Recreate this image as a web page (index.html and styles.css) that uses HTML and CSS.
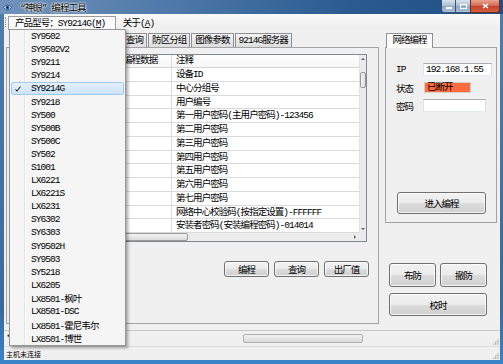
FILE: index.html
```html
<!DOCTYPE html>
<html lang="zh-CN">

<head>
    <meta charset="UTF-8">
    <title>“神眼” 编程工具</title>
    <link rel="stylesheet" href="styles.css">
</head>

<body>

    <header class="titlebar">
        <svg class="appicon" width="9" height="7" viewBox="0 0 9 7">
            <path d="M0.5 3.5 Q4.5 -1 8.5 3.5 Q4.5 8 0.5 3.5Z" fill="#fff" stroke="#1d3f78" stroke-width="0.8" />
            <circle cx="4.5" cy="3.5" r="2" fill="#2f6fd0" />
            <circle cx="4.5" cy="3.5" r="0.9" fill="#0a1a3a" />
        </svg>
        <span class="wintitle">“神眼” 编程工具</span>
        <div class="caption">
            <span class="cbtn cmin"><svg width="6" height="2"><rect width="6" height="2" fill="#fff" /></svg></span>
            <span class="cbtn cmax"><svg width="7" height="5"><rect x=".5" y=".5" width="6" height="4" fill="none" stroke="#fff" /></svg></span>
            <span class="cbtn cclose"><svg width="7" height="6"><path d="M1 1L6 5M6 1L1 5" stroke="#fff" stroke-width="1.6" /></svg></span>
        </div>
    </header>

    <div class="client">
        <nav class="menubar">
            <span class="grip"></span>
            <span class="menu open">产品型号：SY9214G(<u>M</u>)</span>
            <span class="menu">关于(<u>A</u>)</span>
        </nav>

        <div class="main">
            <!-- venstre: programmeringsdata -->
            <section class="leftcol">
                <div class="tabs">
                    <span class="tab">查询</span>
                    <span class="tab">防区分组</span>
                    <span class="tab">图像参数</span>
                    <span class="tab">9214G服务器</span>
                </div>
                <div class="page datapage">
                    <div class="list">
                        <div class="rows">
                            <div class="row head"><span class="c0"></span><span class="c1">编程数据</span><span class="c2">注释</span></div>
                            <div class="row"><span class="c0"></span><span class="c1"></span><span class="c2">设备ID</span></div>
                            <div class="row"><span class="c0"></span><span class="c1"></span><span class="c2">中心分组号</span></div>
                            <div class="row"><span class="c0"></span><span class="c1"></span><span class="c2">用户编号</span></div>
                            <div class="row"><span class="c0"></span><span class="c1"></span><span class="c2">第一用户密码(主用户密码)-123456</span></div>
                            <div class="row"><span class="c0"></span><span class="c1"></span><span class="c2">第二用户密码</span></div>
                            <div class="row"><span class="c0"></span><span class="c1"></span><span class="c2">第三用户密码</span></div>
                            <div class="row"><span class="c0"></span><span class="c1"></span><span class="c2">第四用户密码</span></div>
                            <div class="row"><span class="c0"></span><span class="c1"></span><span class="c2">第五用户密码</span></div>
                            <div class="row"><span class="c0"></span><span class="c1"></span><span class="c2">第六用户密码</span></div>
                            <div class="row"><span class="c0"></span><span class="c1"></span><span class="c2">第七用户密码</span></div>
                            <div class="row"><span class="c0"></span><span class="c1"></span><span class="c2">网络中心校验码(按指定设置)-FFFFFF</span></div>
                            <div class="row"><span class="c0"></span><span class="c1"></span><span class="c2">安装者密码(安装编程密码)-014014</span></div>
                        </div>
                        <div class="vscroll">
                            <span class="arr"><i class="tri up"></i></span>
                            <span class="vthumb"></span>
                            <span class="fill"></span>
                            <span class="arr"><i class="tri down"></i></span>
                        </div>
                        <div class="hscroll">
                            <span class="arr"><i class="tri left"></i></span>
                            <span class="hthumb"></span>
                            <span class="fill"></span>
                            <span class="arr"><i class="tri right"></i></span>
                        </div>
                        <div class="corner"></div>
                    </div>
                    <div class="btnrow">
                        <button class="btn">编程</button>
                        <button class="btn">查询</button>
                        <button class="btn">出厂值</button>
                    </div>
                </div>
            </section>

            <!-- højre: netværk -->
            <section class="rightcol">
                <div class="tabs">
                    <span class="tab sel">网络编程</span>
                </div>
                <div class="page netpage">
                    <div class="field"><label>IP</label><span class="input">192.168.1.55</span></div>
                    <div class="field st"><label>状态</label><span class="state">已断开</span></div>
                    <div class="field"><label>密码</label><span class="input pw"></span></div>
                    <button class="btn enter">进入编程</button>
                </div>
                <div class="armbtns">
                    <button class="btn tall">布防</button>
                    <button class="btn tall">撤防</button>
                    <button class="btn tall wide">校时</button>
                </div>
            </section>
        </div>

        <div class="status s1">
            <span class="panel1">*</span>
            <span class="progress"></span>
            <span class="fill"></span>
            <span class="sgrip"></span>
        </div>
        <div class="status s2">
            <span class="fill">主机未连接</span>
            <span class="sgrip"></span>
        </div>
    </div>

    <ul class="dropdown">
        <li><span class="chk"></span>SY9502</li>
        <li><span class="chk"></span>SY9502V2</li>
        <li><span class="chk"></span>SY9211</li>
        <li><span class="chk"></span>SY9214</li>
        <li class="valgt"><span class="chk"><svg width="6" height="6" viewBox="0 0 6 6"><path d="M0.6 3.4L2 5.2L5.4 0.6" fill="none" stroke="#000" stroke-width="1" /></svg></span>SY9214G</li>
        <li><span class="chk"></span>SY9218</li>
        <li><span class="chk"></span>SY500</li>
        <li><span class="chk"></span>SY500B</li>
        <li><span class="chk"></span>SY500C</li>
        <li><span class="chk"></span>SY502</li>
        <li><span class="chk"></span>S1001</li>
        <li><span class="chk"></span>LX6221</li>
        <li><span class="chk"></span>LX6221S</li>
        <li><span class="chk"></span>LX6231</li>
        <li><span class="chk"></span>SY6302</li>
        <li><span class="chk"></span>SY6303</li>
        <li><span class="chk"></span>SY9502H</li>
        <li><span class="chk"></span>SY9503</li>
        <li><span class="chk"></span>SY5218</li>
        <li><span class="chk"></span>LX6205</li>
        <li><span class="chk"></span>LX8501-枫叶</li>
        <li><span class="chk"></span>LX8501-DSC</li>
        <li><span class="chk"></span>LX8501-霍尼韦尔</li>
        <li><span class="chk"></span>LX8501-博世</li>
    </ul>

</body>

</html>
```

FILE: styles.css
```css
body {
    margin: 0;
    width: 503px;
    height: 364px;
    overflow: hidden;
    position: relative;
    background: linear-gradient(#4f7cab 0%, #3a6a9c 85%, #3b84cb 100%);
    font-family: "Liberation Mono", "Noto Sans CJK SC", monospace;
    font-size: 9.5px;
    letter-spacing: -0.95px;
    color: #000;
}

/* TITLE BAR */

.titlebar {
    height: 14px;
    display: flex;
    align-items: center;
    padding: 0 3px;
    background: linear-gradient(90deg, #7193bb 0%, #4d78a8 35%, #2a5a8f 70%, #1f4f86 100%);
}

.appicon {
    margin-right: 8px;
}

.wintitle {
    text-shadow: 0 0 3px #fff, 0 0 2px #fff, 0 0 1px #fff;
}

.caption {
    margin-left: auto;
    align-self: flex-start;
    display: flex;
}

.cbtn {
    height: 13px;
    box-sizing: border-box;
    border: 1px solid #3d526e;
    border-top: none;
    display: flex;
    align-items: center;
    justify-content: center;
}

.cmin {
    width: 14px;
    border-radius: 0 0 0 3px;
    border-right: none;
    align-items: flex-end;
    padding-bottom: 3px;
    background: linear-gradient(#d8e2ee, #aabdd4 50%, #8ea6c3 51%, #a9bfd8);
}

.cmax {
    width: 15px;
    border-right: none;
    background: linear-gradient(#d8e2ee, #aabdd4 50%, #8ea6c3 51%, #a9bfd8);
}

.cclose {
    width: 30px;
    border-radius: 0 0 3px 0;
    border-color: #6b2a22;
    background: linear-gradient(#e8a493, #d2664f 50%, #c2402a 51%, #d7603f);
}

/* CLIENT */

.client {
    margin: 0 3px 0 4px;
    height: 346px;
    display: flex;
    flex-direction: column;
    background: #f0f0f0;
}

.menubar {
    height: 16px;
    flex: none;
    display: flex;
    align-items: flex-end;
    background: linear-gradient(#f9f9f9, #eeeeee);
}

.grip {
    align-self: center;
    height: 10px;
    border-left: 1px dotted #8a8a8a;
    margin: 0 2px 0 1px;
}

.menu {
    height: 13px;
    line-height: 13px;
    padding: 0 6px;
    border: 1px solid transparent;
    border-bottom: none;
}

.menu.open {
    padding-right: 9.5px;
    border-color: #9d9d9d;
    background: #fbfbfb;
}

.main {
    flex: 1;
    display: flex;
    padding-top: 3px;
}

.tabs {
    display: flex;
    height: 14px;
    flex: none;
}

.tab {
    height: 14px;
    box-sizing: border-box;
    line-height: 13px;
    padding: 0 3px;
    margin-right: 1px;
    border: 1px solid #8e9096;
    border-bottom: none;
    background: linear-gradient(#f4f4f4, #dddddd);
}

.tab.sel {
    height: 15px;
    margin: 0 0 -1px 1px;
    padding: 0 5.4px;
    background: #fff;
    position: relative;
    z-index: 1;
}

.page {
    border: 1px solid #a3a3a3;
    background: #f0f0f0;
    box-sizing: border-box;
}

/* LEFT */

.leftcol {
    width: 373px;
    margin-left: 2px;
    display: flex;
    flex-direction: column;
}

.leftcol .tabs {
    padding-left: 116px;
}

.datapage {
    height: 277px;
    padding: 6px 9px 0 5px;
}

.list {
    display: grid;
    grid-template-columns: 1fr 7px;
    grid-template-rows: 178px 8px;
    margin-right: 2px;
    border: 1px solid #828790;
    background: #fff;
}

.rows {
    overflow: hidden;
}

.row {
    display: flex;
    height: 13.75px;
    box-sizing: border-box;
    line-height: 13px;
    border-bottom: 1px solid #dadada;
}

.row.head {
    height: 13px;
    line-height: 12px;
    border-bottom-color: #d5d5d5;
    background: linear-gradient(#ffffff, #f5f6f7);
}

.row span {
    box-sizing: border-box;
    padding-left: 4px;
    white-space: nowrap;
}

.c0 {
    width: 106px;
    border-right: 1px solid #dadada;
}

.c1 {
    width: 53px;
    border-right: 1px solid #dadada;
}

.c2 {
    flex: 1;
}

.vscroll,
.hscroll {
    display: flex;
    background: #ececec;
}

.vscroll {
    flex-direction: column;
    border-left: 1px solid #e2e2e2;
}

.fill {
    flex: 1;
}

.arr {
    width: 6px;
    height: 8px;
    display: flex;
    align-items: center;
    justify-content: center;
}

.hscroll .arr {
    width: 8px;
    height: 8px;
}

.tri {
    width: 0;
    height: 0;
    border: 2px solid transparent;
}

.tri.up {
    border-bottom-color: #606060;
    border-top-width: 0;
}

.tri.down {
    border-top-color: #606060;
    border-bottom-width: 0;
}

.tri.left {
    border-right-color: #606060;
    border-left-width: 0;
}

.tri.right {
    border-left-color: #606060;
    border-right-width: 0;
}

.vthumb {
    height: 16px;
    margin: 9px 0 0 0;
    box-sizing: border-box;
    border: 1px solid #9a9a9a;
    border-radius: 2px;
    background: linear-gradient(90deg, #f4f4f4, #dcdcdc);
}

.hthumb {
    width: 167px;
    box-sizing: border-box;
    border: 1px solid #9a9a9a;
    border-radius: 2px;
    background: linear-gradient(#f4f4f4, #dcdcdc);
}

.corner {
    background: #ececec;
}

.btnrow {
    display: flex;
    justify-content: flex-end;
    gap: 5px;
    margin-top: 19px;
}

.btn {
    width: 45px;
    height: 16px;
    padding: 0;
    font: inherit;
    letter-spacing: inherit;
    color: #000;
    border: 1px solid #707070;
    border-radius: 3px;
    background: linear-gradient(#f2f2f2, #ebebeb 50%, #dddddd 51%, #cfcfcf);
    box-shadow: inset 0 0 0 1px rgba(255, 255, 255, 0.75);
}

/* RIGHT */

.rightcol {
    width: 112px;
    margin-left: 6px;
    display: flex;
    flex-direction: column;
}

.netpage {
    height: 176px;
    padding: 15px 0 0 10px;
    display: flex;
    flex-direction: column;
}

.field {
    display: flex;
    align-items: center;
    height: 13px;
    margin-bottom: 6px;
}

.field.st {
    height: 11px;
}

.field label {
    width: 27px;
}

.input {
    width: 69px;
    height: 13px;
    box-sizing: border-box;
    padding-left: 2px;
    line-height: 11px;
    border: 1px solid;
    border-color: #abadb3 #dbdfe6 #e3e9ef #e2e3ea;
    background: #fff;
}

.input.pw {
    width: 63px;
}

.state {
    width: 47px;
    height: 11px;
    box-sizing: border-box;
    margin-left: 1px;
    padding-left: 2px;
    line-height: 9px;
    border: 1px solid #d2cfcd;
    background: #fd6b3e;
}

.btn.enter {
    width: 89px;
    height: 22px;
    margin: auto 0 8px 1px;
}

.armbtns {
    display: grid;
    grid-template-columns: 47px 47px;
    grid-template-rows: 24px 23px;
    column-gap: 4px;
    row-gap: 6px;
    margin-top: 40px;
    padding-left: 4px;
}

.btn.tall {
    width: 47px;
    height: 24px;
}

.btn.wide {
    grid-column: span 2;
    width: 98px;
    height: 23px;
}

/* STATUS */

.status {
    display: flex;
    align-items: center;
    flex: none;
    border-top: 1px solid #c8c8c8;
    box-sizing: border-box;
}

.s1 {
    height: 16px;
}

.s2 {
    height: 14px;
    font-size: 7px;
    letter-spacing: 0;
    padding-left: 2px;
    border-top-color: #dcdcdc;
}

.panel1 {
    width: 237px;
    padding-left: 2px;
}

.progress {
    width: 120px;
    height: 9px;
    box-sizing: border-box;
    border: 1px solid #b0b0b0;
    border-radius: 2px;
    background: linear-gradient(#f2f2f2, #dadada);
}

.sgrip {
    width: 7px;
    height: 7px;
    align-self: flex-end;
    margin: 0 1px 1px 0;
    background-image: radial-gradient(circle, #a5a5a5 0.7px, transparent 1px);
    background-size: 2.4px 2.4px;
    clip-path: polygon(100% 0, 100% 100%, 0 100%);
}

/* DROPDOWN */

.dropdown {
    position: absolute;
    left: 9px;
    top: 29px;
    width: 117px;
    box-sizing: border-box;
    margin: 0;
    padding: 0 0 1px 0;
    list-style: none;
    border: 1px solid #979797;
    background: linear-gradient(90deg, transparent 14px, #e2e3e3 14px, #e2e3e3 15px, #ffffff 15px, #ffffff 16px, transparent 16px), #f5f5f5;
    box-shadow: 2px 2px 3px rgba(0, 0, 0, 0.35);
    z-index: 10;
}

.dropdown li {
    display: flex;
    align-items: center;
    height: 13.1px;
    box-sizing: border-box;
    margin: 0 1px;
    border: 1px solid transparent;
    border-radius: 2px;
    white-space: nowrap;
}

.chk {
    width: 19px;
    padding-left: 3px;
    box-sizing: border-box;
    display: flex;
    align-items: center;
}

.dropdown .valgt {
    border-color: #9fcaf2;
    background: linear-gradient(#e4f0fc, #cce3fa);
}
```
